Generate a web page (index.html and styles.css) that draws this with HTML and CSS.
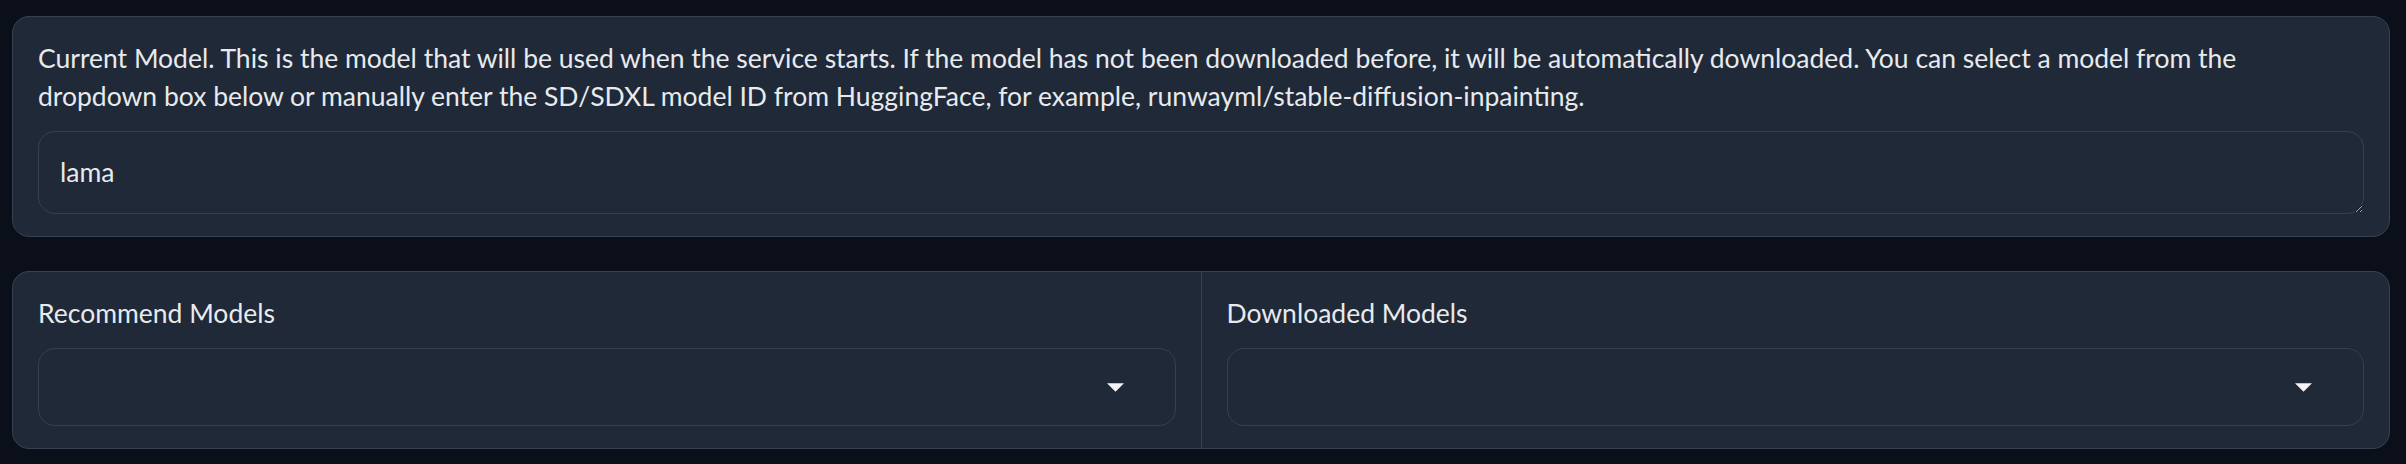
FILE: index.html
```html
<!DOCTYPE html>
<html lang="en">
<head>
<meta charset="utf-8">
<title>Model settings</title>
<link rel="stylesheet" href="styles.css">
</head>
<body>
<main class="page">
  <section class="block">
    <label class="field">
      <span class="label">Current Model. This is the model that will be used when the service starts. If the model has not been downloaded before, it will be automatically downloaded. You can select a model from the<br>dropdown box below or manually enter the SD/SDXL model ID from HuggingFace, for example, runwayml/stable-diffusion-inpainting.</span>
      <textarea class="textarea" rows="1">lama</textarea>
    </label>
  </section>

  <section class="block row">
    <div class="col">
      <span class="label">Recommend Models</span>
      <div class="dropdown">
        <input class="dd-input" type="text" value="">
        <svg class="dd-arrow" viewBox="0 0 18 9" width="17" height="9" aria-hidden="true"><path d="M0 0 L18 0 L9 9 Z" fill="#f3f4f6"/></svg>
      </div>
    </div>
    <div class="col">
      <span class="label">Downloaded Models</span>
      <div class="dropdown">
        <input class="dd-input" type="text" value="">
        <svg class="dd-arrow" viewBox="0 0 18 9" width="17" height="9" aria-hidden="true"><path d="M0 0 L18 0 L9 9 Z" fill="#f3f4f6"/></svg>
      </div>
    </div>
  </section>
</main>
</body>
</html>
```

FILE: styles.css
```css
html, body {
  margin: 0;
  padding: 0;
  background: #0b0f19;
}

body {
  font-family: Lato, "Noto Sans", sans-serif;
  color: #e8eaee;
  font-size: 26.5px;
}

.page {
  display: flex;
  flex-direction: column;
  gap: 34px;
  padding: 16px 16px 0 12px;
}

.block {
  background: #1f2937;
  border: 1px solid #374151;
  border-radius: 17px;
  padding: 22px 25px;
}

.field {
  display: flex;
  flex-direction: column;
}

.label {
  display: block;
  line-height: 38px;
  margin-bottom: 16px;
  color: #e8eaee;
}

.textarea {
  display: block;
  box-sizing: border-box;
  width: 100%;
  height: 83px;
  margin: 0;
  padding: 21px 21px;
  background: #1f2937;
  border: 1px solid #374151;
  border-radius: 17px;
  color: #e8eaee;
  font-family: Lato, "Noto Sans", sans-serif;
  font-size: 26.5px;
  line-height: 39px;
  resize: vertical;
  outline: none;
  color-scheme: dark;
  overflow: hidden;
}

.row {
  display: grid;
  grid-template-columns: 1fr 1fr;
  gap: 1px;
  padding: 0;
  background: #374151;
  overflow: hidden;
}

.col {
  background: #1f2937;
  padding: 22px 25px;
}

.dropdown {
  display: flex;
  align-items: center;
  box-sizing: border-box;
  height: 78px;
  padding: 0 51px 0 22px;
  border: 1px solid #374151;
  border-radius: 17px;
  background: #1f2937;
}

.dd-input {
  flex: 1;
  min-width: 0;
  border: none;
  outline: none;
  background: transparent;
  color: #e8eaee;
  font-family: Lato, "Noto Sans", sans-serif;
  font-size: 26.5px;
}

.dd-arrow {
  display: block;
  flex: none;
}
```
